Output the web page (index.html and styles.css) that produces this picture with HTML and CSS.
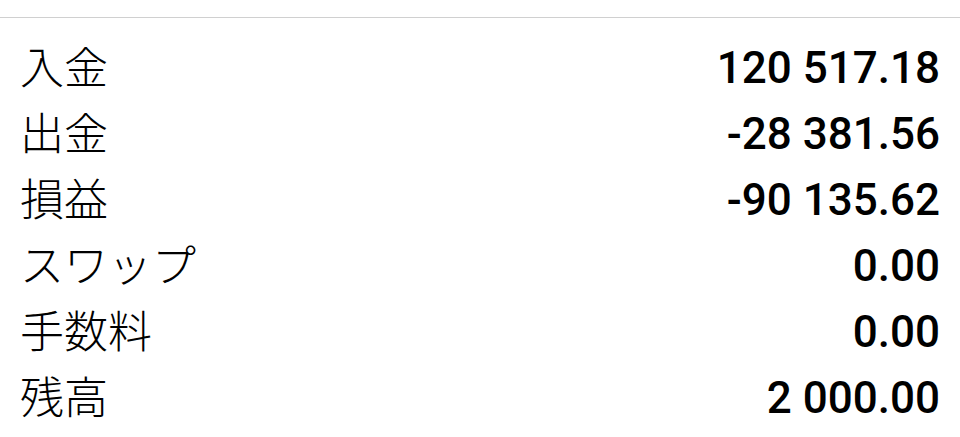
FILE: index.html
```html
<!DOCTYPE html>
<html lang="ja">
<head>
  <meta charset="UTF-8">
  <title>残高</title>
  <link rel="stylesheet" href="styles.css">
</head>
<body>

  <div class="top-space"></div>

  <div class="summary">
    <div class="row"><span class="label">入金</span><span class="value">120 517.18</span></div>
    <div class="row"><span class="label">出金</span><span class="value">-28 381.56</span></div>
    <div class="row"><span class="label">損益</span><span class="value">-90 135.62</span></div>
    <div class="row"><span class="label">スワップ</span><span class="value">0.00</span></div>
    <div class="row"><span class="label">手数料</span><span class="value">0.00</span></div>
    <div class="row"><span class="label">残高</span><span class="value">2 000.00</span></div>
  </div>

</body>
</html>
```

FILE: styles.css
```css
body {
  margin: 0;
  padding: 0;
  background-color: #ffffff;
  color: #000000;
  font-family: Roboto, "Noto Sans CJK JP", sans-serif;
}

.top-space {
  height: 17px;
  border-bottom: 1px solid #d0d0d0;
}

.summary {
  padding: 17px 20px 0 20px;
}

.row {
  display: flex;
  justify-content: space-between;
  align-items: center;
  height: 66px;
}

.label {
  font-family: "Noto Sans CJK JP", sans-serif;
  font-size: 44px;
  font-weight: 300;
  line-height: 1.2;
  padding-bottom: 5px;
}

.value {
  font-size: 44px;
  font-weight: 500;
  line-height: 1.2;
  white-space: pre;
}
```
